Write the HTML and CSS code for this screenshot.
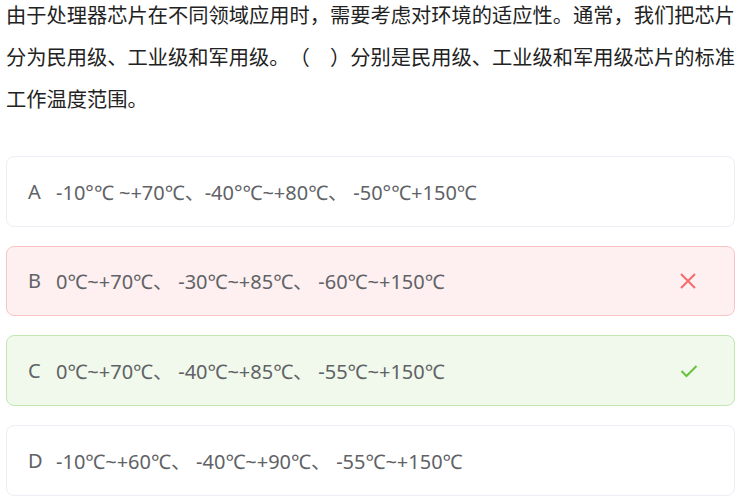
FILE: index.html
```html
<!DOCTYPE html>
<html lang="zh-CN">
<head>
<meta charset="utf-8">
<link rel="stylesheet" href="styles.css">
</head>
<body>
<div class="quiz">
  <p class="question">由于处理器芯片在不同领域应用时，需要考虑对环境的适应性。通常，我们把芯片分为民用级、工业级和军用级。（　）分别是民用级、工业级和军用级芯片的标准工作温度范围。</p>
  <ul class="options">
    <li class="option">
      <span class="letter">A</span>
      <span class="text">-10°℃ ~+70℃、-40°℃~+80℃、 -50°℃+150℃</span>
    </li>
    <li class="option wrong">
      <span class="letter">B</span>
      <span class="text">0℃~+70℃、 -30℃~+85℃、 -60℃~+150℃</span>
      <svg class="mark" width="20" height="20" viewBox="0 0 20 20"><path d="M3 3 L17 17 M17 3 L3 17" stroke="#f56c6c" stroke-width="2" fill="none"/></svg>
    </li>
    <li class="option right">
      <span class="letter">C</span>
      <span class="text">0℃~+70℃、 -40℃~+85℃、 -55℃~+150℃</span>
      <svg class="mark" width="20" height="20" viewBox="0 0 20 20"><path d="M3.5 10 L8.5 15 L18.5 5" stroke="#67c23a" stroke-width="2" fill="none"/></svg>
    </li>
    <li class="option">
      <span class="letter">D</span>
      <span class="text">-10℃~+60℃、 -40℃~+90℃、 -55℃~+150℃</span>
    </li>
  </ul>
</div>
</body>
</html>
```

FILE: styles.css
```css
html, body {
  margin: 0;
  padding: 0;
  background: #ffffff;
}
body {
  font-family: "Noto Sans CJK SC", "Noto Sans", sans-serif;
}
.quiz {
  padding: 0 5px 0 6px;
}
.question {
  margin: -6px 0 0 0;
  font-size: 20.25px;
  line-height: 42px;
  color: #222222;
  text-spacing-trim: space-all;
}
.options {
  list-style: none;
  margin: 36px 0 0 0;
  padding: 0;
  display: flex;
  flex-direction: column;
  gap: 19px;
}
.option {
  display: flex;
  align-items: center;
  height: 70.67px;
  box-sizing: border-box;
  padding: 0 36px 0 21px;
  border: 1px solid #ebeef5;
  border-radius: 8px;
  background: #ffffff;
  color: #606266;
  font-family: "Noto Sans", "Noto Sans CJK SC", sans-serif;
  font-size: 20px;
  text-spacing-trim: space-all;
}
.option.wrong {
  background: #fef0f0;
  border-color: #fbc4c4;
}
.option.right {
  background: #f0f9eb;
  border-color: #c2e7b0;
}
.letter {
  width: 28px;
  flex: none;
}
.text {
  flex: 1;
}
.mark {
  flex: none;
}
```
